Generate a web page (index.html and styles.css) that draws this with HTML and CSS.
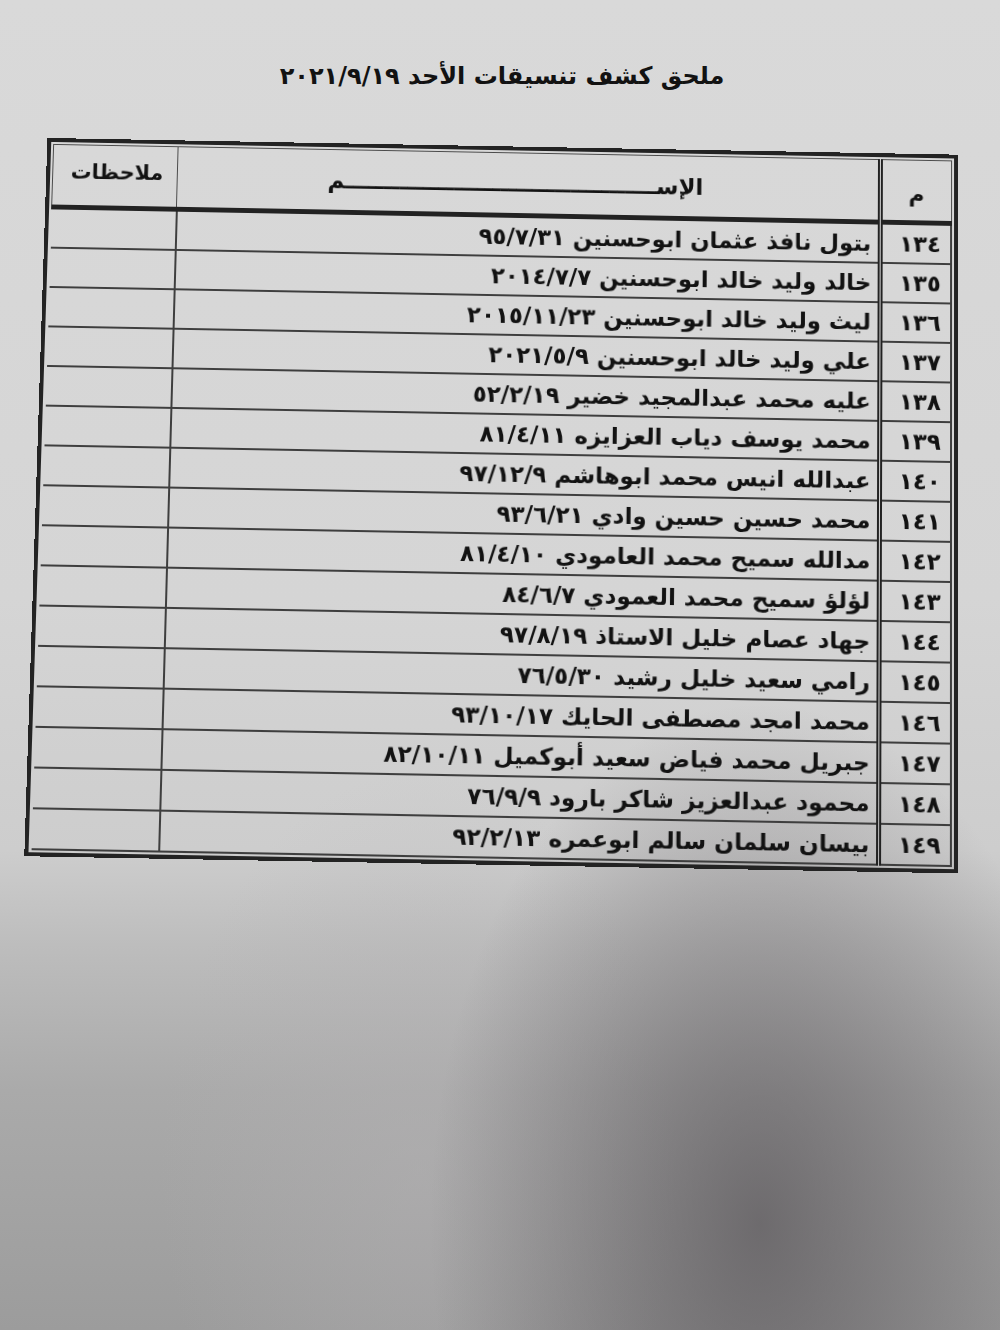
FILE: index.html
```html
<!DOCTYPE html>
<html lang="ar" dir="rtl">
<head>
<meta charset="utf-8">
<title>ملحق كشف تنسيقات الأحد</title>
<link rel="stylesheet" href="styles.css">
</head>
<body>
<main class="sheet">
  <h1 class="title">ملحق كشف تنسيقات الأحد <span class="d">٢٠٢١/٩/١٩</span></h1>
  <div class="frame">
    <table class="grid">
      <colgroup><col class="c-no"><col class="c-name"><col class="c-note"></colgroup>
      <thead>
        <tr><th class="no"><span class="mim">م</span></th><th class="name">الإســــــــــــــــــــــــــــــــــــــــم</th><th class="note">ملاحظات</th></tr>
      </thead>
      <tbody>
        <tr><td class="no">١٣٤</td><td class="name">بتول نافذ عثمان ابوحسنين <span class="d">٩٥/٧/٣١</span></td><td class="note"></td></tr>
        <tr><td class="no">١٣٥</td><td class="name">خالد وليد خالد ابوحسنين <span class="d">٢٠١٤/٧/٧</span></td><td class="note"></td></tr>
        <tr><td class="no">١٣٦</td><td class="name">ليث وليد خالد ابوحسنين <span class="d">٢٠١٥/١١/٢٣</span></td><td class="note"></td></tr>
        <tr><td class="no">١٣٧</td><td class="name">علي وليد خالد ابوحسنين <span class="d">٢٠٢١/٥/٩</span></td><td class="note"></td></tr>
        <tr><td class="no">١٣٨</td><td class="name">عليه محمد عبدالمجيد خضير <span class="d">٥٢/٢/١٩</span></td><td class="note"></td></tr>
        <tr><td class="no">١٣٩</td><td class="name">محمد يوسف دياب العزايزه <span class="d">٨١/٤/١١</span></td><td class="note"></td></tr>
        <tr><td class="no">١٤٠</td><td class="name">عبدالله انيس محمد ابوهاشم <span class="d">٩٧/١٢/٩</span></td><td class="note"></td></tr>
        <tr><td class="no">١٤١</td><td class="name">محمد حسين حسين وادي <span class="d">٩٣/٦/٢١</span></td><td class="note"></td></tr>
        <tr><td class="no">١٤٢</td><td class="name">مدالله سميح محمد العامودي <span class="d">٨١/٤/١٠</span></td><td class="note"></td></tr>
        <tr><td class="no">١٤٣</td><td class="name">لؤلؤ سميح محمد العمودي <span class="d">٨٤/٦/٧</span></td><td class="note"></td></tr>
        <tr><td class="no">١٤٤</td><td class="name">جهاد عصام خليل الاستاذ <span class="d">٩٧/٨/١٩</span></td><td class="note"></td></tr>
        <tr><td class="no">١٤٥</td><td class="name">رامي سعيد خليل رشيد <span class="d">٧٦/٥/٣٠</span></td><td class="note"></td></tr>
        <tr><td class="no">١٤٦</td><td class="name">محمد امجد مصطفى الحايك <span class="d">٩٣/١٠/١٧</span></td><td class="note"></td></tr>
        <tr><td class="no">١٤٧</td><td class="name">جبريل محمد فياض سعيد أبوكميل <span class="d">٨٢/١٠/١١</span></td><td class="note"></td></tr>
        <tr><td class="no">١٤٨</td><td class="name">محمود عبدالعزيز شاكر بارود <span class="d">٧٦/٩/٩</span></td><td class="note"></td></tr>
        <tr><td class="no">١٤٩</td><td class="name">بيسان سلمان سالم ابوعمره <span class="d">٩٢/٢/١٣</span></td><td class="note"></td></tr>
      </tbody>
    </table>
  </div>
</main>
</body>
</html>
```

FILE: styles.css
```css
html, body {
  margin: 0;
  padding: 0;
}
body {
  width: 1000px;
  height: 1330px;
  overflow: hidden;
  font-family: "DejaVu Sans", "Noto Sans", sans-serif;
  color: #121212;
  background:
    radial-gradient(ellipse 330px 520px at 76% 92%, rgba(82, 78, 82, 0.66), rgba(82, 78, 82, 0) 100%),
    radial-gradient(ellipse 260px 400px at 42% 88%, rgba(180, 178, 180, 0.45), rgba(180, 178, 180, 0) 100%),
    linear-gradient(180deg, #d9d9d9 0%, #d5d5d5 45%, #cdcdcd 64%, #bdbdbd 71%, #aaaaaa 82%, #9c9c9c 100%);
}
.sheet {
  display: flex;
  flex-direction: column;
  padding-top: 58px;
}
.title {
  margin: 0;
  align-self: center;
  font-size: 24px;
  font-weight: bold;
  line-height: 36px;
  padding-left: 4px;
}
.d {
  direction: ltr;
  unicode-bidi: isolate;
  letter-spacing: 1px;
}
.frame {
  margin: 56px 42px 0 0;
  align-self: flex-start;
  width: 910px;
  border: 4px solid #232323;
  padding: 2px;
  transform-origin: 100% 50%;
  transform: skewY(1.05deg) perspective(1000px) rotateX(2deg);
}
.grid {
  width: 100%;
  border-collapse: collapse;
  table-layout: fixed;
}
.c-no { width: 72px; }
.c-note { width: 126px; }
.grid th {
  height: 53px;
  font-weight: bold;
  border: 1px solid #4a4a4a;
  border-bottom: 5px solid #222;
  padding: 0;
  vertical-align: middle;
}
.grid th.no {
  border-left: 5px double #222;
  font-size: 22px;
}
.mim {
  display: inline-block;
  padding-top: 8px;
}
.grid th.name {
  font-size: 23px;
  text-align: right;
  padding-right: 176px;
  white-space: nowrap;
  overflow: hidden;
}
.grid th.note {
  text-align: center;
  font-size: 21px;
  padding-left: 4px;
  padding-bottom: 8px;
}
.grid td {
  height: 38px;
  padding: 0;
  border: 2px solid #3e3e3e;
}
.grid td.no {
  text-align: center;
  font-size: 23px;
  font-weight: bold;
  letter-spacing: 7px;
  padding-left: 8px;
  border-left: 5px double #222;
}
.grid td.name {
  text-align: right;
  font-size: 23px;
  font-weight: bold;
  padding-right: 6px;
  white-space: nowrap;
}
.grid td.note {
  border-left: 0;
}
```
